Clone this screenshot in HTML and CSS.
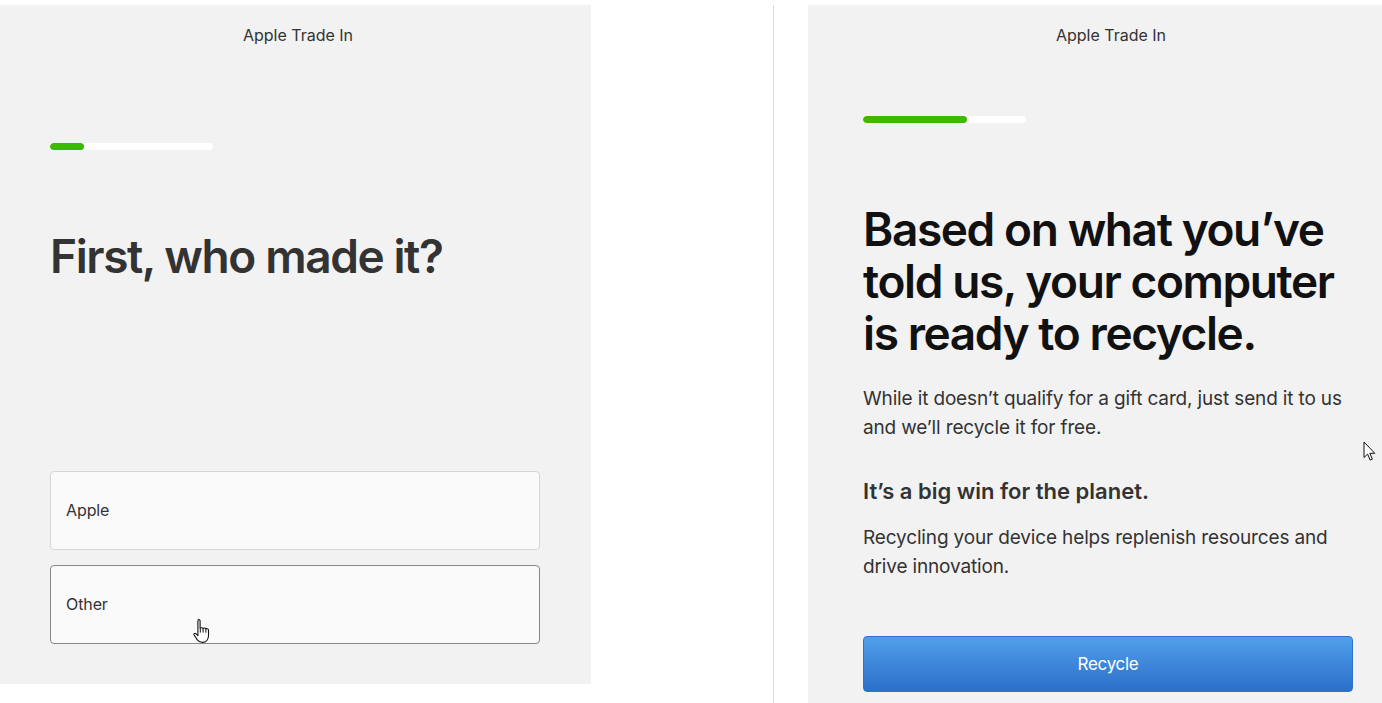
FILE: index.html
```html
<!DOCTYPE html>
<html lang="en">
<head>
    <meta charset="UTF-8">
    <meta name="viewport" content="width=device-width, initial-scale=1.0">
    <title>Apple Trade In</title>
    <link rel="stylesheet" href="styles.css">
</head>
<body>
    <!-- Step 1: Manufacturer -->
    <section class="panel panel-left">
        <header class="panel-header">Apple Trade In</header>
        <div class="progress"><div class="progress-fill" style="width: 21%"></div></div>
        <h1 class="title title-soft">First, who made it?</h1>
        <div class="options">
            <button class="option">Apple</button>
            <button class="option option-hover">Other</button>
        </div>
    </section>

    <div class="divider"></div>

    <!-- Result: Recycle -->
    <section class="panel panel-right">
        <header class="panel-header">Apple Trade In</header>
        <div class="progress"><div class="progress-fill" style="width: 64%"></div></div>
        <h1 class="title">Based on what you’ve told us, your computer is ready to recycle.</h1>
        <p class="copy">While it doesn’t qualify for a gift card, just send it to us and we’ll recycle it for free.</p>
        <h2 class="subtitle">It’s a big win for the planet.</h2>
        <p class="copy">Recycling your device helps replenish resources and drive innovation.</p>
        <button class="button">Recycle</button>
    </section>

    <!-- Mouse pointers captured in the screenshot -->
    <svg class="cursor cursor-hand" width="18" height="26" viewBox="0 0 18 26">
        <path d="M5.5 1.5c1 0 1.6.7 1.6 1.6v7.2c.3-.8 2.9-.9 3 .3.4-.9 2.7-.9 2.8.5.5-.8 2.6-.6 2.6.9v5.5c0 3.8-2.2 6.9-6.1 6.9-2.4 0-3.9-1-5.2-2.8L1.1 17c-.6-.9.4-2.2 1.7-1.4l2.1 2V3.1c0-.9.6-1.6.6-1.6z" fill="#fff" stroke="#111" stroke-width="1.1" stroke-linejoin="round"/>
        <path d="M7.3 10.4v4.2M10.1 10.8v3.8M12.9 11.4v3.3" stroke="#111" stroke-width="1" fill="none"/>
    </svg>
    <svg class="cursor cursor-arrow" width="14" height="21" viewBox="0 0 14 21">
        <path d="M1 1v15.5l3.6-3.4 2.6 6 2.2-1-2.6-5.8h5z" fill="#fff" stroke="#111" stroke-width="1" stroke-linejoin="round"/>
    </svg>
</body>
</html>
```

FILE: styles.css
```css
/* Page */
body {
    margin: 0;
    height: 703px;
    padding-top: 5px;
    box-sizing: border-box;
    overflow: hidden;
    display: flex;
    align-items: flex-start;
    background: #fff;
    font-family: 'Inter', 'Helvetica Neue', Arial, sans-serif;
    color: #333;
    position: relative;
}

/* Panels */
.panel {
    flex-shrink: 0;
    box-sizing: border-box;
    background: #f2f2f2;
    padding: 19px 0 0 50px;
}

.panel-left {
    width: 591px;
    height: 679px;
}

.panel-right {
    width: 596px;
    height: 698px;
    margin-left: 34px;
    padding-left: 55px;
}

.divider {
    flex-shrink: 0;
    width: 1px;
    height: 698px;
    margin-left: 182px;
    background: #dcdcdc;
}

.panel-header {
    margin-left: -45px;
    text-align: center;
    font-size: 16px;
    line-height: 22px;
    color: #333;
}

.panel-left .progress {
    margin-top: 97px;
}

.panel-right .progress {
    margin-top: 70px;
}

/* Progress bar */
.progress {
    width: 163px;
    height: 7px;
    border-radius: 4px;
    background: #fff;
    overflow: hidden;
}

.progress-fill {
    height: 100%;
    border-radius: 4px;
    background: #3dba00;
}

/* Headings */
.title {
    margin: 80px 0 0;
    width: 480px;
    font-size: 46px;
    line-height: 52px;
    font-weight: 600;
    letter-spacing: -1.4px;
    color: #111;
}

.title-soft {
    color: #333;
}

.subtitle {
    margin: 35px 0 0;
    font-size: 22px;
    line-height: 28px;
    font-weight: 600;
    color: #333;
}

.copy {
    margin: 25px 0 0;
    width: 490px;
    font-size: 19px;
    line-height: 29px;
    letter-spacing: -0.15px;
    color: #333;
}

.subtitle + .copy {
    margin-top: 18px;
}

/* Choice buttons */
.options {
    margin-top: 189px;
    display: flex;
    flex-direction: column;
    gap: 15px;
    width: 490px;
}

.option {
    height: 79px;
    padding: 0 15px 2px;
    text-align: left;
    font-family: inherit;
    font-size: 16px;
    letter-spacing: -0.1px;
    color: #333;
    background: #fafafa;
    border: 1px solid #d6d6d6;
    border-radius: 4px;
}

.option-hover {
    border-color: #888;
}

/* Primary button */
.button {
    display: block;
    margin-top: 55px;
    width: 490px;
    height: 56px;
    font-family: inherit;
    font-size: 17px;
    letter-spacing: -0.3px;
    color: #fff;
    background: linear-gradient(to bottom, #519fea, #2b6fc9);
    border: 1px solid #2f73cc;
    border-radius: 4px;
}

/* Pointers */
.cursor {
    position: absolute;
}

.cursor-hand {
    left: 193px;
    top: 618px;
}

.cursor-arrow {
    left: 1363px;
    top: 441px;
}
```
